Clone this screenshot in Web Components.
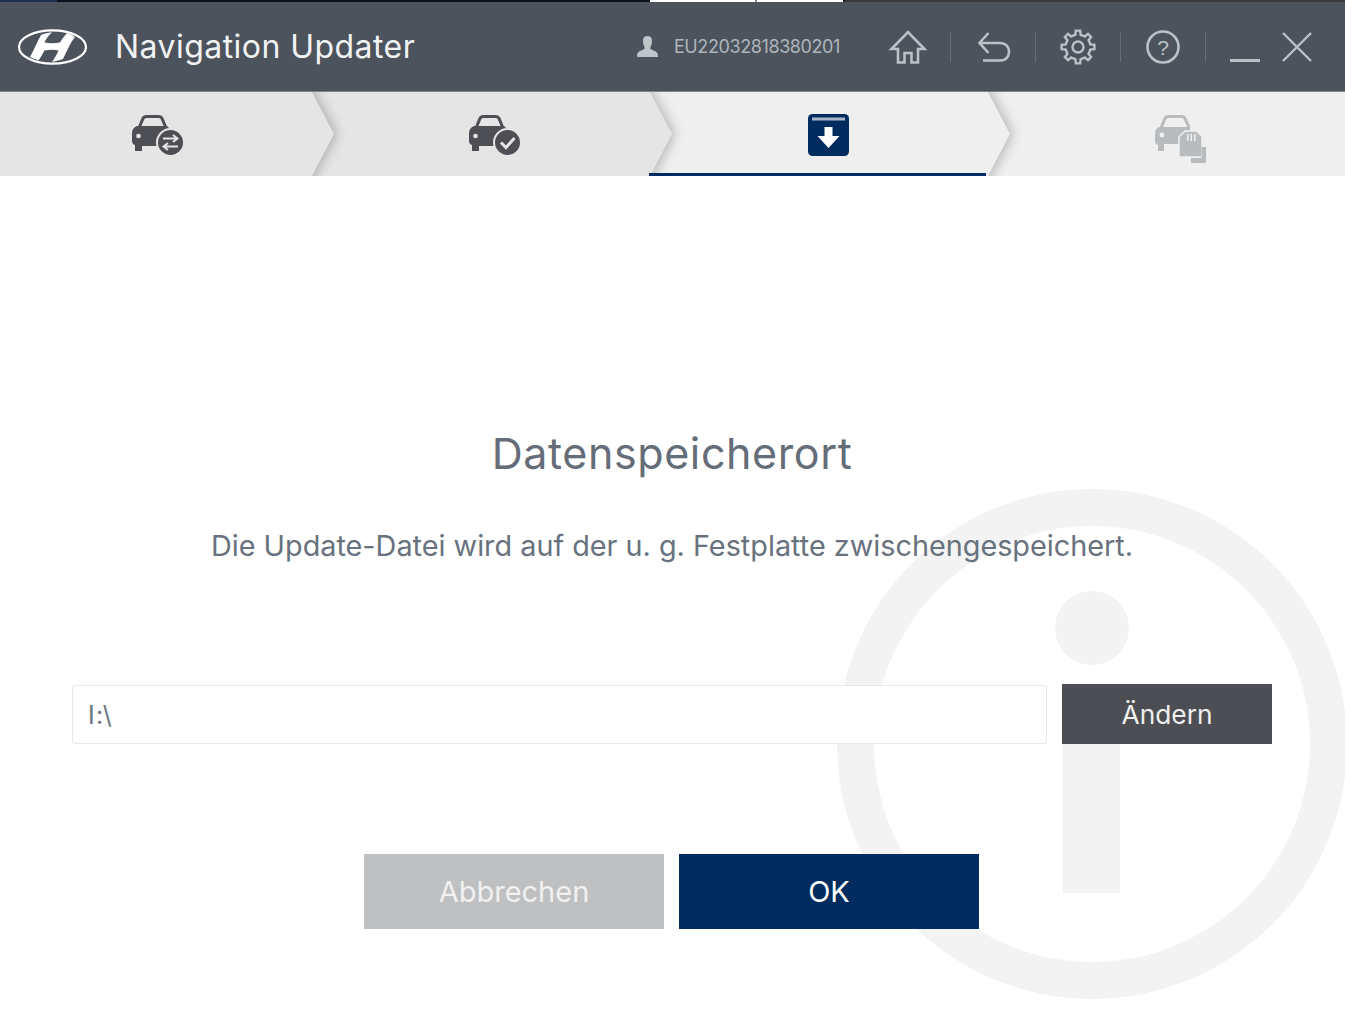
<!DOCTYPE html>
<html lang="de">
<head>
<meta charset="utf-8">
<title>Navigation Updater</title>
<style>
  html, body { margin: 0; background: #fff; }
  body { font-family: Inter, "Open Sans", "Liberation Sans", sans-serif; }
</style>
</head>
<body>
<updater-app>
  <top-strip></top-strip>
  <app-header>
    <span slot="title">Navigation Updater</span>
    <span slot="user">EU22032818380201</span>
  </app-header>
  <step-bar>
    <step-item icon="sync" first></step-item>
    <step-item icon="check"></step-item>
    <step-item icon="download" active></step-item>
    <step-item icon="card" disabled last></step-item>
  </step-bar>
  <location-panel>
    <span slot="title">Datenspeicherort</span>
    <span slot="text">Die Update-Datei wird auf der u. g. Festplatte zwischengespeichert.</span>
    <path-field slot="field">I:\</path-field>
    <app-button slot="change" kind="dark" style="width:210px;height:60px;font-size:26.3px">Ändern</app-button>
    <app-button slot="actions" kind="grey" style="width:300px;height:75px">Abbrechen</app-button>
    <app-button slot="actions" kind="navy" style="width:300px;height:75px">OK</app-button>
  </location-panel>
</updater-app>

<script>
class UpdaterApp extends HTMLElement {
  constructor() {
    super();
    this.attachShadow({ mode: 'open' }).innerHTML = `
      <style>
        :host { display: flex; flex-direction: column; width: 1345px; height: 1020px; overflow: hidden; }
      </style>
      <slot></slot>`;
  }
}

class TopStrip extends HTMLElement {
  constructor() {
    super();
    this.attachShadow({ mode: 'open' }).innerHTML = `
      <style>
        :host { display: flex; height: 2px; flex: none; }
        i { display: block; height: 100%; }
      </style>
      <i style="width:57px;background:#1c2f4e"></i>
      <i style="width:593px;background:#0a1220"></i>
      <i style="width:105px;background:#fff"></i>
      <i style="width:2px;background:#888"></i>
      <i style="width:86px;background:#fff"></i>
      <i style="width:2px;background:#1c1c1c"></i>
      <i style="flex:1;background:#3b3b3b"></i>`;
  }
}

function gearPath(cx, cy, outer, inner, teeth) {
  // outline of a cog, one flat tooth per step
  const step = Math.PI * 2 / teeth;
  const pts = [];
  for (let i = 0; i < teeth; i++) {
    const a = i * step - Math.PI / 2;
    [[-0.5, inner], [-0.27, inner], [-0.17, outer], [0.17, outer], [0.27, inner]].forEach(p => {
      const t = a + p[0] * step;
      pts.push((cx + Math.cos(t) * p[1]).toFixed(1) + ' ' + (cy + Math.sin(t) * p[1]).toFixed(1));
    });
  }
  return 'M' + pts.join('L') + 'Z';
}

class AppHeader extends HTMLElement {
  constructor() {
    super();
    this.attachShadow({ mode: 'open' }).innerHTML = `
      <style>
        :host { display: flex; align-items: center; flex: none; height: 89px; padding-left: 17px; background: #4c535d; border-bottom: 1px solid #7d848c; }
        .logo { width: 71px; height: 38px; margin-right: 27px; flex: none; }
        .title { font-size: 32px; color: #f1f2f3; flex: 1; white-space: nowrap; letter-spacing: 0.45px; }
        .user { display: flex; align-items: center; gap: 15px; margin-right: 26px; font-size: 18px; color: #aeb5bc; letter-spacing: -0.4px; }
        .user svg { width: 23px; height: 23px; flex: none; }
        .tool { width: 85px; height: 30px; display: flex; justify-content: center; align-items: center; border-right: 1px solid #676d75; box-sizing: border-box; flex: none; }
        .tool svg, .win svg { display: block; overflow: visible; fill: none; stroke: #bcc1c6; }
        .win { display: flex; align-items: center; justify-content: center; flex: none; height: 40px; }
      </style>
      <svg class="logo" viewBox="0 0 71 38">
        <ellipse cx="35.5" cy="19" rx="33.5" ry="16.7" fill="none" stroke="#fff" stroke-width="2.2"/>
        <path fill="#fff" d="M24 7 C27 5.500 31 4.600 35 4.200 C31 8 29 11 27.500 14.500 Q35 16 43 14.500 C45 11 47 8 50 5.200 Q55 6.500 58 9 C53 15 50 23 46 31 C42 32.500 38 33.400 35 33.800 C38 30 40 26 41.500 22.500 Q35 21 27.500 22.500 C25.500 26 24 29 21.700 32.200 Q16 31 13 29 C17 22 20 14 24 7 Z"/>
      </svg>
      <div class="title"><slot name="title"></slot></div>
      <div class="user">
        <svg viewBox="0 0 23 23"><path fill="#c0c5ca" d="M11.500 1 C7.500 1 6.800 4 7 7 C7.200 10 8.500 11.500 8.800 13 C8.800 15 2.500 15.500 1.200 19 L1 22 H22 L21.800 19 C20.500 15.500 14.200 15 14.200 13 C14.500 11.500 15.800 10 16 7 C16.200 4 15.500 1 11.500 1 Z"/></svg>
        <slot name="user"></slot>
      </div>
      <div class="tool">
        <svg width="36" height="34" viewBox="0 0 36 34" stroke-width="2.6" stroke-linejoin="miter"><path d="M1.500 19 L18 2 L34.500 19 H28 V32.500 H21.500 V23 H14.500 V32.500 H8 V19 Z"/></svg>
      </div>
      <div class="tool">
        <svg width="33" height="30" viewBox="0 0 33 30" stroke-width="2.6" style="margin-left:2px"><path d="M10.500 1 L1.500 11 L10.500 21 M1.500 11 H22 C34 11 34 28.500 22 28.500 H5"/></svg>
      </div>
      <div class="tool">
        <svg width="34" height="34" viewBox="0 0 34 34" stroke-width="2.4"><path d="${gearPath(17, 17, 16.5, 12.500, 8)}"/><circle cx="17" cy="17" r="5.500"/></svg>
      </div>
      <div class="tool">
        <svg width="34" height="34" viewBox="0 0 34 34" stroke-width="2.6"><circle cx="17" cy="17" r="15.500"/><text x="17" y="24.500" text-anchor="middle" font-family="Liberation Sans, sans-serif" font-size="21" fill="#bcc1c6" stroke="none">?</text></svg>
      </div>
      <div class="win" style="width:77px">
        <svg width="30" height="30" viewBox="0 0 30 30" stroke-width="3"><path d="M0 28.500 H30"/></svg>
      </div>
      <div class="win" style="width:28px;margin-right:34px">
        <svg width="30" height="30" viewBox="0 0 30 30" stroke-width="2.4"><path d="M1 1 L29 29 M29 1 L1 29"/></svg>
      </div>`;
  }
}

class StepBar extends HTMLElement {
  constructor() {
    super();
    this.attachShadow({ mode: 'open' }).innerHTML = `
      <style>
        :host { display: grid; grid-template-columns: 312px 338px 338px 357px; height: 84px; flex: none; }
      </style>
      <slot></slot>`;
  }
}

const CAR = `
  <path d="M7 15 L11 5.500 Q12 3.500 14.500 3.500 H26.500 Q29 3.500 30 5.500 L34 15" fill="none" stroke="COL" stroke-width="3"/>
  <path fill="COL" d="M5 13 H35 Q39 16 39 21 V33 H10 V38 H3 V32 Q0 31 0 28 V20 Q0 15 5 13 Z"/>
  <circle cx="6.500" cy="23" r="2.300" fill="BG"/>`;

const STEP_ICONS = {
  sync: `<svg style="margin:4px 0 0 8px" width="56" height="46" viewBox="0 0 56 46">${CAR.replace(/COL/g, '#4d4f54').replace(/BG/g, '#e5e5e5')}
    <circle cx="38.500" cy="29.500" r="13.500" fill="#4d4f54" stroke="#e5e5e5" stroke-width="2"/>
    <path d="M31 25.500 H45 M41 22 L45.500 25.500 L41 29 M46 33.500 H32 M36 30 L31.500 33.500 L36 37" fill="none" stroke="#e5e5e5" stroke-width="2"/></svg>`,
  check: `<svg style="margin:4px 0 0 10px" width="56" height="46" viewBox="0 0 56 46">${CAR.replace(/COL/g, '#4d4f54').replace(/BG/g, '#e5e5e5')}
    <circle cx="38.500" cy="29.500" r="13.500" fill="#4d4f54" stroke="#e5e5e5" stroke-width="2"/>
    <path d="M32 29.500 L37 34.500 L45.500 25" fill="none" stroke="#e5e5e5" stroke-width="3"/></svg>`,
  download: `<svg style="margin:2px 4px 0 0" width="41" height="42" viewBox="0 0 41 42">
    <rect width="41" height="42" rx="4.500" fill="#002c5f"/>
    <rect x="4" y="3.500" width="33" height="3" fill="#a9b6c8"/>
    <path fill="#fff" d="M16.500 13 H24.500 V22 H31.500 L20.500 34 L9.500 22 H16.500 Z"/></svg>`,
  card: `<svg style="margin:10px 0 0 6px" width="52" height="50" viewBox="0 0 52 50">
    <path d="M6 14 L10 4.500 Q11 2.500 13.500 2.500 H27 Q29 2.500 30 4.500 L34 13" fill="none" stroke="#b9bcbf" stroke-width="3"/>
    <path fill="#b9bcbf" d="M4 13 H35 V23 Q26 20 25 30 H9 V37 H3 V31 Q0 30 0 27 V19 Q0 15 4 13 Z"/>
    <circle cx="7" cy="21" r="2.400" fill="#efefef"/>
    <path fill="#b9bcbf" stroke="#efefef" stroke-width="1.500" d="M30 17 H41 L47 22 V43 H24 V23 Z"/>
    <path fill="#efefef" d="M32 20 h1.500 v7 h-1.500 z M35.500 20 h1.500 v7 h-1.500 z M39 20 h1.500 v7 h-1.500 z"/>
    <path fill="#b9bcbf" d="M46.500 33 H51 V49 H36 V44 H46.500 Z"/></svg>`
};

class StepItem extends HTMLElement {
  constructor() {
    super();
    const root = this.attachShadow({ mode: 'open' });
    root.innerHTML = `
      <style>
        :host { display: flex; align-items: center; justify-content: center; position: relative; box-sizing: border-box; padding-left: 22px; background: #e5e5e5; overflow: visible; }
        :host([first]) { padding-left: 0; }
        :host([active]), :host([disabled]) { background: #efefef; }
        .icon { display: flex; position: relative; z-index: 2; }
        .wedge { position: absolute; left: 0; top: 0; width: 40px; height: 84px; z-index: 1; overflow: hidden; }
        .tip { filter: drop-shadow(3px 0 6px rgba(0,0,0,.24)); }
        .bar { position: absolute; left: -1px; right: 2px; bottom: 0; height: 3px; background: #002c5f; z-index: 3; }
      </style>
      <svg class="wedge" viewBox="0 0 40 84">
        <path class="tip" d="M-12 -12 L-6 -12 L0 0 L22 42 L0 84 L-6 96 L-12 96 Z"/>
      </svg>
      <span class="icon"></span>`;
    this.icon = root.querySelector('.icon');
    this.wedge = root.querySelector('.wedge');
    this.tip = root.querySelector('.tip');
  }
  connectedCallback() {
    this.icon.innerHTML = STEP_ICONS[this.getAttribute('icon')];
    if (this.hasAttribute('first')) {
      this.wedge.remove();
    } else {
      const prev = this.previousElementSibling;
      this.tip.setAttribute('fill', prev && prev.hasAttribute('active') ? '#efefef' : '#e5e5e5');
    }
    if (this.hasAttribute('active')) {
      const bar = document.createElement('div');
      bar.className = 'bar';
      this.shadowRoot.appendChild(bar);
    }
  }
}

class LocationPanel extends HTMLElement {
  constructor() {
    super();
    this.attachShadow({ mode: 'open' }).innerHTML = `
      <style>
        :host { display: flex; flex-direction: column; position: relative; flex: 1; overflow: hidden; background: #fff; padding: 252px 73px 0 72px; align-items: stretch; }
        .mark { position: absolute; left: 837px; top: 313px; width: 510px; height: 510px; fill: #f3f3f3; z-index: 0; }
        .body { position: relative; z-index: 1; display: flex; flex-direction: column; align-items: stretch; }
        h1 { margin: 0; font-size: 43px; line-height: 50px; font-weight: 400; color: #646d78; text-align: center; letter-spacing: 0.6px; }
        p { margin: 48px 0 0; font-size: 28.8px; line-height: 40px; color: #68727e; text-align: center; white-space: nowrap; }
        .row { display: flex; gap: 15px; margin-top: 118px; height: 60px; }
        .actions { display: flex; justify-content: center; gap: 15px; margin-top: 110px; padding-right: 1px; }
        ::slotted([slot=field]) { flex: 1; }
      </style>
      <svg class="mark" viewBox="0 0 510 510">
        <path fill-rule="evenodd" d="M255 0 A255 255 0 1 0 255 510 A255 255 0 1 0 255 0 Z M255 37 A218 218 0 1 1 255 473 A218 218 0 1 1 255 37 Z"/>
        <circle cx="255" cy="139" r="37"/>
        <rect x="226" y="205" width="57" height="199"/>
      </svg>
      <div class="body">
        <h1><slot name="title"></slot></h1>
        <p><slot name="text"></slot></p>
        <div class="row"><slot name="field"></slot><slot name="change"></slot></div>
        <div class="actions"><slot name="actions"></slot></div>
      </div>`;
  }
}

class PathField extends HTMLElement {
  constructor() {
    super();
    this.attachShadow({ mode: 'open' }).innerHTML = `
      <style>
        :host { display: flex; align-items: center; box-sizing: border-box; height: 59px; padding-left: 15px; background: #fff; border: 1.500px solid #e8e8e8; border-radius: 3px; font-size: 25px; letter-spacing: 1.2px; color: #6b7683; margin-top: 1px; }
      </style>
      <slot></slot>`;
  }
}

class AppButton extends HTMLElement {
  constructor() {
    super();
    this.attachShadow({ mode: 'open' }).innerHTML = `
      <style>
        :host { display: flex; align-items: center; justify-content: center; flex: none; font-size: 29px; }
        :host([kind=dark]) { background: #4c4e53; color: #f0f0f0; }
        :host([kind=grey]) { background: #bfc0c2; color: #f1f1f1; }
        :host([kind=navy]) { background: #002c5f; color: #fff; }
      </style>
      <slot></slot>`;
  }
}

customElements.define('updater-app', UpdaterApp);
customElements.define('top-strip', TopStrip);
customElements.define('app-header', AppHeader);
customElements.define('step-bar', StepBar);
customElements.define('step-item', StepItem);
customElements.define('location-panel', LocationPanel);
customElements.define('path-field', PathField);
customElements.define('app-button', AppButton);
</script>
</body>
</html>
